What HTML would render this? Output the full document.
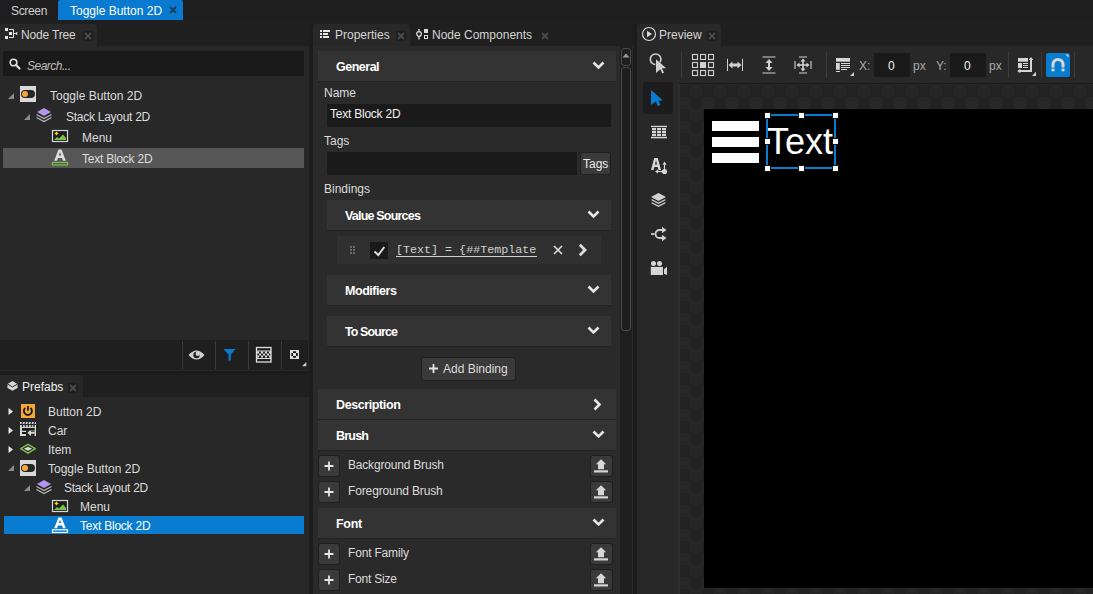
<!DOCTYPE html>
<html><head><meta charset="utf-8">
<style>
*{margin:0;padding:0;box-sizing:border-box}
html,body{width:1093px;height:594px;overflow:hidden;background:#1c1c1c;font-family:"Liberation Sans",sans-serif;font-size:12px;color:#dcdcdc}
.a{position:absolute}
.t{position:absolute;white-space:nowrap;line-height:14px}
.b{font-weight:bold;color:#fff}
svg{position:absolute;overflow:visible}
</style></head><body>

<!-- document tab bar -->
<div class="a" style="left:0;top:0;width:1093px;height:20px;background:#1e1e1e"></div>
<div class="t" style="left:11px;top:4px;color:#cfcfcf;letter-spacing:-0.33px">Screen</div>
<div class="a" style="left:58px;top:0;width:125px;height:20px;background:#0a7ad0;border-radius:2px 2px 0 0"></div>
<div class="t" style="left:70px;top:4px;color:#fff">Toggle Button 2D</div>
<svg style="left:169px;top:6px" width="8" height="8"><path d="M1 1L7 7M7 1L1 7" stroke="#1a3d5c" stroke-width="2"/></svg>

<div class="a" style="left:0;top:20px;width:1093px;height:4px;background:#1f1f1f"></div>
<!-- ===== Node tree panel ===== -->
<div class="a" style="left:0;top:20px;width:309px;height:26px;background:#1f1f1f"></div>
<div class="a" style="left:0;top:24px;width:97px;height:22px;background:#282828;border-radius:0 3px 0 0"></div>
<svg style="left:5px;top:28px" width="13" height="12"><g fill="#e6e6e6"><rect x="0" y="0" width="3" height="3"/><rect x="4" y="4" width="3" height="3"/><rect x="0" y="8" width="3" height="3"/></g><path d="M4 1.5H8.5V9.5H4M8.5 5.5H12M11.8 4V7" stroke="#e6e6e6" stroke-width="1" fill="none"/></svg>
<div class="t" style="left:21px;top:28px;color:#d4d4d4;letter-spacing:-0.17px">Node Tree</div>
<div class="a" style="left:83px;top:31px;width:10px;height:10px;background:#1f1f1f"></div>
<svg style="left:84px;top:32px" width="8" height="8"><path d="M1 1L7 7M7 1L1 7" stroke="#4c4c4c" stroke-width="1.8"/></svg>
<div class="a" style="left:0;top:46px;width:309px;height:325px;background:#282828"></div>
<!-- search -->
<div class="a" style="left:3px;top:51px;width:301px;height:25px;background:#1a1a1a"></div>
<svg style="left:9px;top:58px" width="12" height="12"><circle cx="4.5" cy="4.5" r="3.3" stroke="#e0e0e0" stroke-width="1.6" fill="none"/><path d="M7 7L10.5 10.5" stroke="#e0e0e0" stroke-width="2.2" stroke-linecap="round"/></svg>
<div class="t" style="left:27px;top:59px;color:#bdbdbd;font-style:italic;letter-spacing:-0.5px">Search...</div>
<!-- tree rows -->
<svg style="left:8px;top:93px" width="7" height="7"><path d="M6 0V6H0Z" fill="#8a8a8a"/></svg>
<svg style="left:20px;top:86px" width="16" height="16"><rect width="16" height="16" fill="#d9d9d9"/><rect x="1" y="4" width="14" height="8" rx="4" fill="#262626"/><circle cx="5" cy="8" r="3" fill="#f5a83a"/></svg>
<div class="t" style="left:50px;top:89px">Toggle Button 2D</div>
<svg style="left:24px;top:114px" width="7" height="7"><path d="M6 0V6H0Z" fill="#8a8a8a"/></svg>
<svg style="left:36px;top:107px" width="17" height="16"><path d="M0.5 7.5L8 11.6L15.5 7.5M0.5 10.5L8 14.6L15.5 10.5" stroke="#b8b8b8" stroke-width="1.2" fill="none"/><path d="M8 1L15 5L8 9L1 5Z" fill="#b394f0"/></svg>
<div class="t" style="left:66px;top:110px;letter-spacing:-0.27px">Stack Layout 2D</div>
<svg style="left:52px;top:130px" width="17" height="13"><rect x="0.5" y="0.5" width="15" height="11" stroke="#d8d8d8" stroke-width="1.2" fill="#1e1e1e"/><path d="M2 10L5 7L7 8.5L11 4.5L14 8V10Z" fill="#7dc24a"/><path d="M4.5 1.5L5.5 2.7L6.7 3.5L5.5 4.3L4.5 5.5L3.5 4.3L2.3 3.5L3.5 2.7Z" fill="#ffd400"/></svg>
<div class="t" style="left:82px;top:131px">Menu</div>
<div class="a" style="left:3px;top:148px;width:301px;height:20px;background:#575757"></div>
<svg style="left:52px;top:149px" width="17" height="17"><path d="M2.2 11.8L6.5 0.5H9.5L13.8 11.8H11L10 9H6L5 11.8ZM6.8 6.5H9.2L8 3Z" fill="#dedede"/><rect x="0.5" y="13.5" width="15" height="2.5" stroke="#7dc24a" stroke-width="1.2" fill="none"/></svg>
<div class="t" style="left:82px;top:152px;letter-spacing:-0.23px">Text Block 2D</div>
<!-- bottom toolbar -->
<div class="a" style="left:0;top:340px;width:308px;height:30px;background:#1f1f1f"></div>
<div class="a" style="left:182px;top:341px;width:1px;height:28px;background:#3a3a3a"></div>
<div class="a" style="left:215px;top:341px;width:1px;height:28px;background:#3a3a3a"></div>
<div class="a" style="left:248px;top:341px;width:1px;height:28px;background:#3a3a3a"></div>
<div class="a" style="left:281px;top:341px;width:1px;height:28px;background:#3a3a3a"></div>
<svg style="left:188px;top:349px" width="18" height="12"><path d="M0.5 6Q8.5 -3 16.5 6Q8.5 15 0.5 6Z" fill="#d0d0d0"/><circle cx="8.5" cy="6" r="3.2" fill="#1f1f1f"/><circle cx="9.8" cy="4.8" r="2.2" fill="#d0d0d0"/></svg>
<svg style="left:223px;top:348px" width="14" height="14"><path d="M0.5 1H12.5L7.8 6.5V12.5L5.5 12.8V6.5Z" fill="#0a7ccf"/></svg>
<svg style="left:255px;top:346px" width="18" height="18"><rect x="1.5" y="1.5" width="14.5" height="14.5" stroke="#e0e0e0" stroke-width="1.3" fill="#1f1f1f"/><rect x="2" y="2.5" width="13.5" height="2.5" fill="#e0e0e0" opacity="0"/><path d="M2 5H16M2 12.5H16" stroke="#e0e0e0" stroke-width="1"/><g fill="#e0e0e0"><rect x="2" y="5.5" width="2" height="2"/><rect x="6" y="5.5" width="2" height="2"/><rect x="10" y="5.5" width="2" height="2"/><rect x="14" y="5.5" width="2" height="2"/><rect x="4" y="7.5" width="2" height="2"/><rect x="8" y="7.5" width="2" height="2"/><rect x="12" y="7.5" width="2" height="2"/><rect x="2" y="9.5" width="2" height="2"/><rect x="6" y="9.5" width="2" height="2"/><rect x="10" y="9.5" width="2" height="2"/><rect x="14" y="9.5" width="2" height="2"/></g></svg>
<svg style="left:290px;top:350px" width="9" height="9"><rect width="9" height="9" fill="#dcdcdc"/><g fill="#111"><rect x="3" y="1.3" width="3" height="1.7"/><rect x="3" y="6" width="3" height="1.7"/><rect x="1.3" y="3" width="1.7" height="3"/><rect x="6" y="3" width="1.7" height="3"/></g></svg>
<svg style="left:302px;top:362px" width="5" height="5"><path d="M4.3 0V4.3H0Z" fill="#cccccc"/></svg>

<!-- ===== Prefabs panel ===== -->
<div class="a" style="left:0;top:375px;width:309px;height:22px;background:#1f1f1f"></div>
<div class="a" style="left:0;top:375px;width:83px;height:22px;background:#282828;border-radius:0 3px 0 0"></div>
<svg style="left:7px;top:380px" width="12" height="12"><path d="M0.5 7L5.5 10L10.5 7" stroke="#d8d8d8" stroke-width="1.5" fill="none"/><path d="M5.5 1L10.5 4L5.5 7L0.5 4Z" fill="#d8d8d8"/><path d="M0.5 4V6.5L5.5 9.5L10.5 6.5V4" fill="#d8d8d8"/><path d="M0.5 4L5.5 7L10.5 4" stroke="#282828" stroke-width="1" fill="none"/></svg>
<div class="t" style="left:22px;top:380px;color:#f0f0f0">Prefabs</div>
<div class="a" style="left:68px;top:383px;width:10px;height:10px;background:#1f1f1f"></div>
<svg style="left:69px;top:384px" width="8" height="8"><path d="M1 1L7 7M7 1L1 7" stroke="#4c4c4c" stroke-width="1.8"/></svg>
<div class="a" style="left:0;top:397px;width:309px;height:197px;background:#282828"></div>
<svg style="left:8px;top:408px" width="6" height="8"><path d="M0.5 0L5 3.5L0.5 7Z" fill="#e6e6e6"/></svg>
<svg style="left:21px;top:404px" width="14" height="14"><rect width="14" height="14" fill="#f5a83a"/><path d="M4.3 3.9A4 4 0 1 0 9.5 3.9" stroke="#1e1e1e" stroke-width="1.9" fill="none"/><rect x="6.1" y="2" width="1.8" height="4.8" fill="#1e1e1e"/></svg>
<div class="t" style="left:48px;top:405px">Button 2D</div>
<svg style="left:8px;top:427px" width="6" height="8"><path d="M0.5 0L5 3.5L0.5 7Z" fill="#e6e6e6"/></svg>
<svg style="left:20px;top:421px" width="17" height="16"><g fill="#d8d8d8"><rect x="0" y="1" width="16" height="2"/><rect x="0" y="4" width="16" height="3"/><rect x="0" y="4" width="2" height="11"/><rect x="14.5" y="4" width="1.5" height="11"/><rect x="2" y="9.5" width="4" height="1.5"/><rect x="0" y="13" width="6" height="2"/><rect x="9.5" y="8.5" width="5" height="1.3"/><path d="M7.5 11.8L11 8.3V10.8H14.5V12.8H11V15.3Z"/></g><g fill="#282828"><path d="M2 1H3.2L2.4 3H1.2ZM5 1H6.2L5.4 3H4.2ZM8 1H9.2L8.4 3H7.2ZM11 1H12.2L11.4 3H10.2ZM14 1H15.2L14.4 3H13.2Z"/><circle cx="2.5" cy="5" r="0.9"/><circle cx="5.5" cy="5" r="0.9"/><circle cx="8.5" cy="5" r="0.9"/><circle cx="11.5" cy="5" r="0.9"/><circle cx="14" cy="5" r="0.9"/></g><rect x="2" y="7" width="12.5" height="2.5" fill="#1a1a1a"/><rect x="2" y="11" width="4" height="2" fill="#1a1a1a"/></svg>
<div class="t" style="left:48px;top:424px">Car</div>
<svg style="left:8px;top:446px" width="6" height="8"><path d="M0.5 0L5 3.5L0.5 7Z" fill="#e6e6e6"/></svg>
<svg style="left:20px;top:443px" width="17" height="12"><path d="M8 1.3L15.3 5.7L8 10.2L0.7 5.7Z" stroke="#7dc24a" stroke-width="1.5" fill="none" stroke-linejoin="round"/><path d="M8 3.7L12.2 5.7L8 7.7L3.8 5.7Z" fill="#dcdcdc"/></svg>
<div class="t" style="left:48px;top:443px">Item</div>
<svg style="left:8px;top:465px" width="7" height="7"><path d="M6 0V6H0Z" fill="#8a8a8a"/></svg>
<svg style="left:20px;top:460px" width="16" height="16"><rect width="16" height="16" fill="#d9d9d9"/><rect x="1" y="4" width="14" height="8" rx="4" fill="#262626"/><circle cx="5" cy="8" r="3" fill="#f5a83a"/></svg>
<div class="t" style="left:48px;top:462px">Toggle Button 2D</div>
<svg style="left:24px;top:485px" width="7" height="7"><path d="M6 0V6H0Z" fill="#8a8a8a"/></svg>
<svg style="left:36px;top:479px" width="17" height="16"><path d="M0.5 7.5L8 11.6L15.5 7.5M0.5 10.5L8 14.6L15.5 10.5" stroke="#b8b8b8" stroke-width="1.2" fill="none"/><path d="M8 1L15 5L8 9L1 5Z" fill="#b394f0"/></svg>
<div class="t" style="left:64px;top:481px;letter-spacing:-0.27px">Stack Layout 2D</div>
<svg style="left:52px;top:500px" width="17" height="13"><rect x="0.5" y="0.5" width="15" height="11" stroke="#d8d8d8" stroke-width="1.2" fill="#1e1e1e"/><path d="M2 10L5 7L7 8.5L11 4.5L14 8V10Z" fill="#7dc24a"/><path d="M4.5 1.5L5.5 2.7L6.7 3.5L5.5 4.3L4.5 5.5L3.5 4.3L2.3 3.5L3.5 2.7Z" fill="#ffd400"/></svg>
<div class="t" style="left:80px;top:500px">Menu</div>
<div class="a" style="left:4px;top:516px;width:300px;height:18px;background:#0a7ccf"></div>
<svg style="left:52px;top:517px" width="17" height="17"><path d="M2.2 11.3L6.5 0.5H9.5L13.8 11.3H11L10 8.5H6L5 11.3ZM6.8 6H9.2L8 2.7Z" fill="#ffffff"/><rect x="0.5" y="12.8" width="15" height="2.7" stroke="#ffffff" stroke-width="1.2" fill="none"/></svg>
<div class="t" style="left:80px;top:519px;color:#fff;letter-spacing:-0.23px">Text Block 2D</div>

<!-- ===== Properties panel ===== -->
<div class="a" style="left:313px;top:20px;width:320px;height:26px;background:#1f1f1f"></div>
<div class="a" style="left:313px;top:24px;width:97px;height:22px;background:#282828;border-radius:3px 3px 0 0"></div>
<svg style="left:320px;top:30px" width="11" height="9"><g fill="#e6e6e6"><rect x="0" y="0" width="2" height="2"/><rect x="3" y="0" width="7" height="2"/><rect x="0" y="3" width="2" height="2"/><rect x="3" y="3" width="5" height="2"/><rect x="0" y="6" width="2" height="2"/><rect x="3" y="6" width="6" height="2"/></g></svg>
<div class="t" style="left:335px;top:28px;color:#d4d4d4">Properties</div>
<div class="a" style="left:396px;top:31px;width:10px;height:10px;background:#1f1f1f"></div>
<svg style="left:397px;top:32px" width="8" height="8"><path d="M1 1L7 7M7 1L1 7" stroke="#4c4c4c" stroke-width="1.8"/></svg>
<svg style="left:416px;top:29px" width="13" height="11"><circle cx="3" cy="5" r="2.3" stroke="#e0e0e0" stroke-width="1.2" fill="none"/><path d="M3 0V2.6M3 7.4V10.5" stroke="#e0e0e0" stroke-width="1.3"/><rect x="8" y="0" width="4" height="4" fill="#e0e0e0"/><rect x="8.5" y="6.5" width="3" height="3" stroke="#e0e0e0" stroke-width="1" fill="none"/></svg>
<div class="t" style="left:432px;top:28px;color:#d4d4d4">Node Components</div>
<svg style="left:541px;top:32px" width="8" height="8"><path d="M1 1L7 7M7 1L1 7" stroke="#4c4c4c" stroke-width="1.8"/></svg>
<div class="a" style="left:313px;top:46px;width:320px;height:548px;background:#2a2a2a"></div>
<!-- scrollbar -->
<div class="a" style="left:620px;top:46px;width:12px;height:548px;background:#1e1e1e"></div>
<div class="a" style="left:621px;top:48px;width:10px;height:18px;border:1px solid #4a4a4a;border-radius:3px;background:#1e1e1e"></div>
<svg style="left:622px;top:53px" width="8" height="5"><path d="M4 0.5L7.5 4.5H0.5Z" fill="#9a9a9a"/></svg>
<div class="a" style="left:621px;top:67px;width:10px;height:264px;border:1px solid #4a4a4a;border-radius:3px;background:#1e1e1e"></div>
<div class="a" style="left:318px;top:51px;width:298px;height:31px;background:#333333;border-bottom:1px solid #232323"></div>
<div class="t b" style="left:336px;top:60px;font-size:12.5px;letter-spacing:-0.5px">General</div><svg style="left:592px;top:61px" width="13" height="9"><path d="M1.5 1.5L6.5 6.5L11.5 1.5" stroke="#e6e6e6" stroke-width="2.6" fill="none"/></svg>
<div class="t" style="left:324px;top:86px">Name</div>
<div class="a" style="left:327px;top:104px;width:284px;height:23px;background:#1a1a1a"></div>
<div class="t" style="left:330px;top:107px;color:#f0f0f0;letter-spacing:-0.23px">Text Block 2D</div>
<div class="t" style="left:324px;top:134px">Tags</div>
<div class="a" style="left:327px;top:152px;width:250px;height:23px;background:#1a1a1a"></div>
<div class="a" style="left:580px;top:152px;width:31px;height:23px;background:#3a3a3a;border:1px solid #1f1f1f;border-radius:3px"></div>
<div class="t" style="left:583px;top:157px;color:#ececec">Tags</div>
<div class="t" style="left:324px;top:182px">Bindings</div>
<div class="a" style="left:327px;top:200px;width:284px;height:31px;background:#333333;border-bottom:1px solid #232323"></div>
<div class="t b" style="left:345px;top:209px;font-size:12.5px;letter-spacing:-0.8px">Value Sources</div><svg style="left:587px;top:210px" width="13" height="9"><path d="M1.5 1.5L6.5 6.5L11.5 1.5" stroke="#e6e6e6" stroke-width="2.6" fill="none"/></svg>
<div class="a" style="left:337px;top:236px;width:264px;height:28px;background:#303030"></div>
<svg style="left:350px;top:246px" width="6" height="9"><g fill="#6a6a6a"><rect x="0" y="0" width="2" height="2"/><rect x="3" y="0" width="2" height="2"/><rect x="0" y="3" width="2" height="2"/><rect x="3" y="3" width="2" height="2"/><rect x="0" y="6" width="2" height="2"/><rect x="3" y="6" width="2" height="2"/></g></svg>
<div class="a" style="left:370px;top:242px;width:18px;height:17px;background:#1a1a1a"></div>
<svg style="left:372px;top:244px" width="14" height="13"><path d="M2.5 7.5L6.3 11L12.3 3" stroke="#dedede" stroke-width="2" fill="none"/></svg>
<div class="a" style="left:396px;top:240px;width:141px;height:17px;overflow:hidden;border-bottom:1px solid #cfcfcf"><div class="t" style="left:0;top:3px;font-family:'Liberation Mono',monospace;font-size:11.7px;color:#d0d0d0">[Text] = {##Template}</div></div>
<svg style="left:553px;top:245px" width="10" height="10"><path d="M1 1L9 9M9 1L1 9" stroke="#e0e0e0" stroke-width="1.6"/></svg>
<svg style="left:578px;top:243px" width="10" height="14"><path d="M1.8 1.8L7 7L1.8 12.2" stroke="#dedede" stroke-width="2.8" fill="none"/></svg><div class="a" style="left:327px;top:275px;width:284px;height:31px;background:#333333;border-bottom:1px solid #232323"></div>
<div class="t b" style="left:345px;top:284px;font-size:12.5px;letter-spacing:-0.45px">Modifiers</div><svg style="left:587px;top:285px" width="13" height="9"><path d="M1.5 1.5L6.5 6.5L11.5 1.5" stroke="#e6e6e6" stroke-width="2.6" fill="none"/></svg><div class="a" style="left:327px;top:316px;width:284px;height:31px;background:#333333;border-bottom:1px solid #232323"></div>
<div class="t b" style="left:345px;top:325px;font-size:12.5px;letter-spacing:-0.9px">To Source</div><svg style="left:587px;top:326px" width="13" height="9"><path d="M1.5 1.5L6.5 6.5L11.5 1.5" stroke="#e6e6e6" stroke-width="2.6" fill="none"/></svg>
<div class="a" style="left:421px;top:357px;width:95px;height:24px;background:#3a3a3a;border:1px solid #1f1f1f;border-radius:3px"></div>
<svg style="left:428px;top:363px" width="11" height="11"><path d="M5.5 1V10M1 5.5H10" stroke="#e6e6e6" stroke-width="1.8"/></svg>
<div class="t" style="left:443px;top:362px">Add Binding</div>
<div class="a" style="left:318px;top:389px;width:298px;height:31px;background:#333333;border-bottom:1px solid #232323"></div>
<div class="t b" style="left:336px;top:398px;font-size:12.5px;letter-spacing:-0.4px">Description</div><svg style="left:593px;top:398px" width="9" height="13"><path d="M1.5 1.5L6.5 6.5L1.5 11.5" stroke="#e6e6e6" stroke-width="2.6" fill="none"/></svg><div class="a" style="left:318px;top:420px;width:298px;height:31px;background:#333333;border-bottom:1px solid #232323"></div>
<div class="t b" style="left:336px;top:429px;font-size:12.5px;letter-spacing:-0.8px">Brush</div><svg style="left:592px;top:430px" width="13" height="9"><path d="M1.5 1.5L6.5 6.5L11.5 1.5" stroke="#e6e6e6" stroke-width="2.6" fill="none"/></svg><div class="a" style="left:318px;top:455px;width:22px;height:22px;background:#3a3a3a;border:1px solid #1f1f1f;border-radius:3px"></div>
<svg style="left:323px;top:460px" width="12" height="12"><path d="M6 1.5V10.5M1.5 6H10.5" stroke="#e6e6e6" stroke-width="1.8"/></svg><div class="a" style="left:590px;top:455px;width:23px;height:22px;background:#3a3a3a;border:1px solid #1f1f1f;border-radius:3px"></div>
<svg style="left:591px;top:456px" width="21" height="20"><path d="M10 3.2L15.2 8.3H13V13.2H7V8.3H4.8Z" fill="#d6d6d6"/><rect x="3" y="14.3" width="14" height="2.2" fill="#d6d6d6"/></svg>
<div class="t" style="left:348px;top:458px;letter-spacing:-0.19px">Background Brush</div>
<div class="a" style="left:318px;top:481px;width:22px;height:22px;background:#3a3a3a;border:1px solid #1f1f1f;border-radius:3px"></div>
<svg style="left:323px;top:486px" width="12" height="12"><path d="M6 1.5V10.5M1.5 6H10.5" stroke="#e6e6e6" stroke-width="1.8"/></svg><div class="a" style="left:590px;top:481px;width:23px;height:22px;background:#3a3a3a;border:1px solid #1f1f1f;border-radius:3px"></div>
<svg style="left:591px;top:482px" width="21" height="20"><path d="M10 3.2L15.2 8.3H13V13.2H7V8.3H4.8Z" fill="#d6d6d6"/><rect x="3" y="14.3" width="14" height="2.2" fill="#d6d6d6"/></svg>
<div class="t" style="left:348px;top:484px;letter-spacing:-0.13px">Foreground Brush</div>
<div class="a" style="left:318px;top:508px;width:298px;height:31px;background:#333333;border-bottom:1px solid #232323"></div>
<div class="t b" style="left:336px;top:517px;font-size:12.5px;letter-spacing:-0.27px">Font</div><svg style="left:592px;top:518px" width="13" height="9"><path d="M1.5 1.5L6.5 6.5L11.5 1.5" stroke="#e6e6e6" stroke-width="2.6" fill="none"/></svg><div class="a" style="left:318px;top:543px;width:22px;height:22px;background:#3a3a3a;border:1px solid #1f1f1f;border-radius:3px"></div>
<svg style="left:323px;top:548px" width="12" height="12"><path d="M6 1.5V10.5M1.5 6H10.5" stroke="#e6e6e6" stroke-width="1.8"/></svg><div class="a" style="left:590px;top:543px;width:23px;height:22px;background:#3a3a3a;border:1px solid #1f1f1f;border-radius:3px"></div>
<svg style="left:591px;top:544px" width="21" height="20"><path d="M10 3.2L15.2 8.3H13V13.2H7V8.3H4.8Z" fill="#d6d6d6"/><rect x="3" y="14.3" width="14" height="2.2" fill="#d6d6d6"/></svg>
<div class="t" style="left:348px;top:546px;letter-spacing:-0.18px">Font Family</div>
<div class="a" style="left:318px;top:569px;width:22px;height:22px;background:#3a3a3a;border:1px solid #1f1f1f;border-radius:3px"></div>
<svg style="left:323px;top:574px" width="12" height="12"><path d="M6 1.5V10.5M1.5 6H10.5" stroke="#e6e6e6" stroke-width="1.8"/></svg><div class="a" style="left:590px;top:569px;width:23px;height:22px;background:#3a3a3a;border:1px solid #1f1f1f;border-radius:3px"></div>
<svg style="left:591px;top:570px" width="21" height="20"><path d="M10 3.2L15.2 8.3H13V13.2H7V8.3H4.8Z" fill="#d6d6d6"/><rect x="3" y="14.3" width="14" height="2.2" fill="#d6d6d6"/></svg>
<div class="t" style="left:348px;top:572px;letter-spacing:-0.22px">Font Size</div>

<!-- ===== Preview panel ===== -->
<div class="a" style="left:637px;top:20px;width:456px;height:26px;background:#1f1f1f"></div>
<div class="a" style="left:637px;top:24px;width:84px;height:22px;background:#282828;border-radius:3px 3px 0 0"></div>
<svg style="left:641px;top:26px" width="16" height="16"><circle cx="8" cy="8" r="6.5" stroke="#d8d8d8" stroke-width="1.2" fill="none"/><path d="M6 4.8V11.2L11 8Z" fill="#d8d8d8"/></svg>
<div class="t" style="left:659px;top:28px;color:#d4d4d4">Preview</div>
<div class="a" style="left:707px;top:31px;width:10px;height:10px;background:#1f1f1f"></div>
<svg style="left:708px;top:32px" width="8" height="8"><path d="M1 1L7 7M7 1L1 7" stroke="#4c4c4c" stroke-width="1.8"/></svg>
<!-- toolbar -->
<div class="a" style="left:637px;top:46px;width:456px;height:37px;background:#282828"></div>
<svg style="left:649px;top:52px" width="20" height="24"><circle cx="6.6" cy="7.3" r="5.3" stroke="#d0d0d0" stroke-width="1.6" fill="none"/><path d="M6.3 6L18.2 16.8H13.6L15.6 21.2L12.9 22.4L11 18L6.3 22.3Z" fill="#282828"/><path d="M7 7.2L17.2 16.3H13L15 20.8L13.3 21.6L11.3 17.2L7 21Z" fill="#d0d0d0"/></svg>
<div class="a" style="left:681px;top:52px;width:1px;height:26px;background:#3c3c3c"></div>
<svg style="left:691px;top:53px" width="24" height="24"><g stroke="#d0d0d0" stroke-width="1.1" fill="none"><rect x="1.5" y="1.5" width="5" height="5"/><rect x="9.5" y="1.5" width="5" height="5"/><rect x="17.5" y="1.5" width="5" height="5"/><rect x="1.5" y="9.5" width="5" height="5"/><rect x="17.5" y="9.5" width="5" height="5"/><rect x="1.5" y="17.5" width="5" height="5"/><rect x="9.5" y="17.5" width="5" height="5"/><rect x="17.5" y="17.5" width="5" height="5"/></g><rect x="9" y="9" width="6" height="6" fill="#d0d0d0"/></svg>
<svg style="left:726px;top:58px" width="18" height="14"><path d="M1.5 0.8V13M16.5 0.8V13" stroke="#d0d0d0" stroke-width="1"/><path d="M2.5 7L6.5 3.4V5.5H11.5V3.4L15.5 7L11.5 10.6V8.5H6.5V10.6Z" fill="#d0d0d0"/></svg>
<svg style="left:762px;top:56px" width="14" height="18"><path d="M0.5 1H13.5M0.5 17H13.5" stroke="#d0d0d0" stroke-width="1.1"/><path d="M7 3L10.5 7H8V11H10.5L7 15L3.5 11H6V7H3.5Z" fill="#d0d0d0"/></svg>
<svg style="left:794px;top:56px" width="18" height="18"><path d="M5 1H13M5 17H13M1 5V13M17 5V13" stroke="#d0d0d0" stroke-width="1.1"/><path d="M9 2.5L11.5 5.5H9.8V8.2H12.5V6.5L15.5 9L12.5 11.5V9.8H9.8V12.5H11.5L9 15.5L6.5 12.5H8.2V9.8H5.5V11.5L2.5 9L5.5 6.5V8.2H8.2V5.5H6.5Z" fill="#d0d0d0"/></svg>
<div class="a" style="left:826px;top:52px;width:1px;height:26px;background:#3c3c3c"></div>
<svg style="left:835px;top:57px" width="20" height="20"><g fill="#d6d6d6"><rect x="1" y="1" width="14" height="3.7"/><rect x="1" y="6" width="3.8" height="6.8"/><rect x="6" y="6" width="9" height="1"/><rect x="6" y="8" width="9" height="1"/><rect x="6" y="10" width="9" height="1"/><rect x="6" y="12" width="6" height="1"/><rect x="1" y="14" width="4" height="1"/></g><path d="M19 15V19H15Z" fill="#d0d0d0"/></svg>
<div class="t" style="left:859px;top:59px;color:#a8a8a8">X:</div>
<div class="a" style="left:874px;top:53px;width:36px;height:24px;background:#1a1a1a"></div>
<div class="t" style="left:888px;top:59px;color:#f0f0f0">0</div>
<div class="t" style="left:913px;top:59px;color:#a8a8a8">px</div>
<div class="t" style="left:936px;top:59px;color:#a8a8a8">Y:</div>
<div class="a" style="left:950px;top:53px;width:36px;height:24px;background:#1a1a1a"></div>
<div class="t" style="left:964px;top:59px;color:#f0f0f0">0</div>
<div class="t" style="left:989px;top:59px;color:#a8a8a8">px</div>
<div class="a" style="left:1008px;top:52px;width:1px;height:26px;background:#3c3c3c"></div>
<svg style="left:1016px;top:56px" width="21" height="21"><g fill="#d6d6d6"><rect x="2" y="2" width="10" height="3.7"/><rect x="2" y="7" width="4" height="5"/><rect x="7" y="7" width="5" height="1"/><rect x="7" y="9" width="5" height="1"/><rect x="7" y="11" width="5" height="1"/><rect x="14" y="3.5" width="2" height="12.5"/><rect x="3.5" y="14" width="12.5" height="2"/><path d="M15 1L17.3 4H12.7Z"/><path d="M1.3 15L4.3 12.7V17.3Z"/><path d="M20 15.7V20H16Z"/></g></svg>
<div class="a" style="left:1041px;top:52px;width:1px;height:26px;background:#3c3c3c"></div>
<div class="a" style="left:1046px;top:53px;width:24px;height:24px;background:#0a7ccf;border-radius:2px"></div>
<svg style="left:1046px;top:53px" width="24" height="24"><path d="M7 14.5V11.4A5 5 0 0 1 17 11.4V14.5" stroke="#d8d8d8" stroke-width="3" fill="none"/><rect x="5.5" y="15.6" width="3" height="2.7" fill="#d8d8d8"/><rect x="15.5" y="15.6" width="3" height="2.7" fill="#d8d8d8"/><path d="M19.5 1.5H22.5V4.5Z" fill="#d8d8d8"/></svg>
<div class="a" style="left:1074px;top:52px;width:1px;height:26px;background:#3c3c3c"></div>
<!-- left sidebar -->
<div class="a" style="left:637px;top:83px;width:41px;height:511px;background:#282828"></div>
<div class="a" style="left:643px;top:82px;width:30px;height:32px;background:#1c1c1c;border-radius:3px"></div>
<svg style="left:650px;top:89px" width="14" height="18"><path d="M1 1L13 11.5H8.5L10.5 16L7.8 17L6 12.5L1 16Z" fill="#0a7ccf"/></svg>
<svg style="left:651px;top:125px" width="17" height="15"><g fill="#d6d6d6"><rect x="0" y="0.8" width="16" height="1.3"/><rect x="0" y="11.8" width="16" height="1.5"/><rect x="1" y="3" width="4" height="2.2"/><rect x="6" y="3" width="4" height="2.2"/><rect x="11" y="3" width="4" height="2.2"/><rect x="1" y="5.9" width="4" height="2.2"/><rect x="6" y="5.9" width="4" height="2.2"/><rect x="11" y="5.9" width="4" height="2.2"/><rect x="1" y="8.8" width="4" height="2.2"/><rect x="6" y="8.8" width="4" height="2.2"/><rect x="11" y="8.8" width="4" height="2.2"/></g></svg>
<svg style="left:650px;top:157px" width="18" height="18"><g fill="#d6d6d6"><path d="M1 12.9L4.2 1H7.8L11 12.9H8.4L7.7 10H4.3L3.6 12.9ZM4.9 7.6H7.1L6 3.3Z"/><path d="M14.5 4.6L16.5 7.8H15.1V13H13.9V7.8H12.5Z"/><circle cx="14.5" cy="14.5" r="2.6"/><rect x="7.5" y="13.9" width="6" height="1.2"/><path d="M5 14.5L8 12.6V16.4Z"/></g></svg>
<svg style="left:650px;top:192px" width="18" height="16"><path d="M8.5 12L1 8L2.2 7.3L8.5 10.6L14.8 7.3L16 8Z" fill="#d0d0d0"/><path d="M8.5 15L1 11L2.2 10.3L8.5 13.6L14.8 10.3L16 11Z" fill="#d0d0d0"/><path d="M8.5 1L16 5L8.5 9L1 5Z" fill="#d0d0d0"/></svg>
<svg style="left:650px;top:226px" width="18" height="16"><path d="M1 8H4.5" stroke="#d0d0d0" stroke-width="1.8"/><path d="M13 4H9.5A4 4 0 0 0 9.5 12H13" stroke="#d0d0d0" stroke-width="1.8" fill="none"/><path d="M12 0.8L16.5 4L12 7.2Z M12 8.8L16.5 12L12 15.2Z" fill="#d0d0d0"/></svg>
<svg style="left:650px;top:260px" width="18" height="16"><g fill="#d6d6d6"><circle cx="3.5" cy="3.5" r="2.5"/><circle cx="9.5" cy="3.5" r="2.5"/><rect x="0.8" y="6.9" width="12.2" height="8.1"/><path d="M14 9.3L17 6.7V15L14 13.8Z"/></g></svg>
<!-- canvas area -->
<div class="a" style="left:678px;top:83px;width:415px;height:511px;background:#1c1c1c"></div>
<div class="a" style="left:678px;top:84px;width:2px;height:510px;background:#2e2e2e"></div>
<div class="a" style="left:680px;top:84px;width:413px;height:510px;background:conic-gradient(#272727 25%,#232323 0 50%,#272727 0 75%,#232323 0);background-size:24px 24px;background-position:-2px 1px"></div>
<div class="a" style="left:704px;top:109px;width:389px;height:479px;background:#000"></div>
<div class="a" style="left:712px;top:121px;width:47px;height:10px;background:#fff"></div>
<div class="a" style="left:712px;top:137px;width:47px;height:10px;background:#fff"></div>
<div class="a" style="left:712px;top:153px;width:47px;height:10px;background:#fff"></div>
<div class="t" style="left:767px;top:122px;font-size:36px;line-height:40px;color:#fff">Text</div>
<div class="a" style="left:766px;top:114px;width:70px;height:55px;border:2px solid #0a7ccf"></div>

<div class="a" style="left:764px;top:112px;width:7px;height:7px;background:#fff;border:1px solid #111"></div>
<div class="a" style="left:764px;top:138px;width:7px;height:7px;background:#fff;border:1px solid #111"></div>
<div class="a" style="left:764px;top:165px;width:7px;height:7px;background:#fff;border:1px solid #111"></div>
<div class="a" style="left:798px;top:112px;width:7px;height:7px;background:#fff;border:1px solid #111"></div>
<div class="a" style="left:798px;top:165px;width:7px;height:7px;background:#fff;border:1px solid #111"></div>
<div class="a" style="left:832px;top:112px;width:7px;height:7px;background:#fff;border:1px solid #111"></div>
<div class="a" style="left:832px;top:138px;width:7px;height:7px;background:#fff;border:1px solid #111"></div>
<div class="a" style="left:832px;top:165px;width:7px;height:7px;background:#fff;border:1px solid #111"></div>

</body></html>
